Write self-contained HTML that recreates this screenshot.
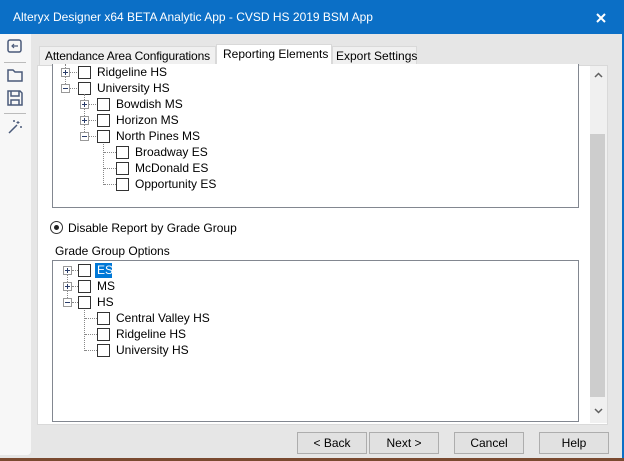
<!DOCTYPE html>
<html><head><style>
*{margin:0;padding:0;box-sizing:border-box}
body{width:624px;height:461px;position:relative;overflow:hidden;background:#e6e6e6;font-family:"Segoe UI","Liberation Sans",sans-serif;font-size:12px;color:#000}
.a{position:absolute}
.t{position:absolute;white-space:nowrap;line-height:14px}
.cb{position:absolute;width:13px;height:13px;border:1px solid #333;background:#fff}
.ex{position:absolute;width:9px;height:9px;border:1px solid #999;background:#fff}
.ex:before{content:"";position:absolute;left:1px;top:3px;width:5px;height:1px;background:#2a3d6a}
.ex.p:after{content:"";position:absolute;left:3px;top:1px;width:1px;height:5px;background:#2a3d6a}
.hd{position:absolute;height:1px;border-top:1px dotted #888}
.vd{position:absolute;width:1px;border-left:1px dotted #888}
.btn{position:absolute;top:432px;height:22px;border:1px solid #adadad;background:#e1e1e1;text-align:center;line-height:20px}
</style></head><body>
<div class="a" style="left:0;top:0;width:624px;height:34px;background:#0b6fc6"></div>
<div class="t" style="left:13px;top:10px;color:#fff;font-size:12px">Alteryx Designer x64 BETA Analytic App - CVSD HS 2019 BSM App</div>
<svg class="a" style="left:596px;top:13px" width="10" height="10"><path d="M1 1l8 8M9 1l-8 8" stroke="#fff" stroke-width="2"/></svg>
<div class="a" style="left:622px;top:34px;width:2px;height:424px;background:#0b6fc6"></div>
<div class="a" style="left:0;top:458px;width:624px;height:3px;background:#7a4a30"></div>
<!-- left toolbar -->
<div class="a" style="left:0;top:34px;width:31px;height:421px;background:#f7f7f7;border-radius:0 0 4px 0"></div>
<svg class="a" style="left:7px;top:39px" width="16" height="16"><rect x="1" y="1" width="13" height="12" rx="2" fill="none" stroke="#4a5a7a" stroke-width="1.5"/><path d="M11 7H5M7 5L5 7l2 2" fill="none" stroke="#4a5a7a" stroke-width="1.2"/></svg>
<div class="a" style="left:4px;top:62px;width:22px;height:1px;background:#bbb"></div>
<svg class="a" style="left:7px;top:68px" width="16" height="14"><path d="M1 2h5l2 2h7v9H1z" fill="none" stroke="#4a5a7a" stroke-width="1.5"/></svg>
<svg class="a" style="left:7px;top:90px" width="16" height="16"><path d="M1 1h12l2 2v12H1z M4 1v5h8V1 M4 15v-5h8v5" fill="none" stroke="#4a5a7a" stroke-width="1.5"/></svg>
<div class="a" style="left:4px;top:113px;width:22px;height:1px;background:#bbb"></div>
<svg class="a" style="left:7px;top:119px" width="16" height="16"><path d="M2 14l8-8" stroke="#4a5a7a" stroke-width="1.5"/><path d="M11 2v3M9.5 3.5h3M14 7v2M13 8h2M7 1v2M6 2h2" stroke="#4a5a7a"/></svg>
<!-- tabs -->
<div class="a" style="left:39px;top:46px;width:177px;height:20px;background:#f0f0f0;border:1px solid #d9d9d9;border-bottom:none"></div>
<div class="t" style="left:45px;top:49px;letter-spacing:-0.15px">Attendance Area Configurations</div>
<div class="a" style="left:332px;top:46px;width:85px;height:20px;background:#f0f0f0;border:1px solid #d9d9d9;border-bottom:none"></div>
<div class="t" style="left:336px;top:49px">Export Settings</div>
<div class="a" style="left:37px;top:65px;width:571px;height:360px;background:#fff;border:1px solid #d9d9d9"></div>
<div class="a" style="left:216px;top:44px;width:116px;height:23px;background:#fff;border:1px solid #d9d9d9;border-bottom:none"></div>
<div class="t" style="left:223px;top:47px">Reporting Elements</div>
<!-- scrollbar -->
<div class="a" style="left:590px;top:66px;width:17px;height:357px;background:#f0f0f0"></div>
<div class="a" style="left:590px;top:134px;width:15px;height:263px;background:#cdcdcd"></div>
<svg class="a" style="left:594px;top:72px" width="9" height="6"><path d="M1 5l3.5-3.5L8 5" fill="none" stroke="#606060" stroke-width="1.5"/></svg>
<svg class="a" style="left:594px;top:408px" width="9" height="6"><path d="M1 1l3.5 3.5L8 1" fill="none" stroke="#606060" stroke-width="1.5"/></svg>
<!-- upper tree box -->
<div class="a" style="left:52px;top:64px;width:527px;height:144px;border:1px solid #828790;border-top:none;background:#fff"></div>
<div class="vd" style="left:65px;top:64px;height:24px"></div>
<div class="ex p" style="left:61px;top:68px"></div><div class="hd" style="left:70px;top:72px;width:7px"></div>
<div class="cb" style="left:78px;top:66px"></div><div class="t" style="left:97px;top:65px">Ridgeline HS</div>
<div class="ex" style="left:61px;top:84px"></div><div class="hd" style="left:70px;top:88px;width:7px"></div>
<div class="cb" style="left:78px;top:82px"></div><div class="t" style="left:97px;top:81px">University HS</div>
<div class="vd" style="left:84px;top:94px;height:42px"></div>
<div class="ex p" style="left:80px;top:100px"></div><div class="hd" style="left:89px;top:104px;width:7px"></div>
<div class="cb" style="left:97px;top:98px"></div><div class="t" style="left:116px;top:97px">Bowdish MS</div>
<div class="ex p" style="left:80px;top:116px"></div><div class="hd" style="left:89px;top:120px;width:7px"></div>
<div class="cb" style="left:97px;top:114px"></div><div class="t" style="left:116px;top:113px">Horizon MS</div>
<div class="ex" style="left:80px;top:132px"></div><div class="hd" style="left:89px;top:136px;width:7px"></div>
<div class="cb" style="left:97px;top:130px"></div><div class="t" style="left:116px;top:129px">North Pines MS</div>
<div class="vd" style="left:103px;top:144px;height:41px"></div>
<div class="hd" style="left:104px;top:152px;width:12px"></div><div class="cb" style="left:116px;top:146px"></div><div class="t" style="left:135px;top:145px">Broadway ES</div>
<div class="hd" style="left:104px;top:168px;width:12px"></div><div class="cb" style="left:116px;top:162px"></div><div class="t" style="left:135px;top:161px">McDonald ES</div>
<div class="hd" style="left:104px;top:184px;width:12px"></div><div class="cb" style="left:116px;top:178px"></div><div class="t" style="left:135px;top:177px">Opportunity ES</div>
<!-- radio -->
<div class="a" style="left:50px;top:221px;width:13px;height:13px;border:1px solid #333;border-radius:50%;background:#fff"></div>
<div class="a" style="left:54px;top:225px;width:5px;height:5px;border-radius:50%;background:#222"></div>
<div class="t" style="left:68px;top:221px">Disable Report by Grade Group</div>
<div class="t" style="left:55px;top:244px">Grade Group Options</div>
<!-- lower tree box -->
<div class="a" style="left:52px;top:260px;width:527px;height:162px;border:1px solid #828790;background:#fff"></div>
<div class="vd" style="left:67px;top:274px;height:28px"></div>
<div class="ex p" style="left:63px;top:266px"></div><div class="hd" style="left:72px;top:270px;width:6px"></div>
<div class="cb" style="left:78px;top:264px"></div>
<div class="a" style="left:95px;top:263px;width:17px;height:15px;background:#0078d7"></div>
<div class="t" style="left:97px;top:263px;color:#fff">ES</div>
<div class="ex p" style="left:63px;top:282px"></div><div class="hd" style="left:72px;top:286px;width:6px"></div>
<div class="cb" style="left:78px;top:280px"></div><div class="t" style="left:97px;top:279px">MS</div>
<div class="ex" style="left:63px;top:298px"></div><div class="hd" style="left:72px;top:302px;width:6px"></div>
<div class="cb" style="left:78px;top:296px"></div><div class="t" style="left:97px;top:295px">HS</div>
<div class="vd" style="left:84px;top:310px;height:41px"></div>
<div class="hd" style="left:85px;top:318px;width:12px"></div><div class="cb" style="left:97px;top:312px"></div><div class="t" style="left:116px;top:311px">Central Valley HS</div>
<div class="hd" style="left:85px;top:334px;width:12px"></div><div class="cb" style="left:97px;top:328px"></div><div class="t" style="left:116px;top:327px">Ridgeline HS</div>
<div class="hd" style="left:85px;top:350px;width:12px"></div><div class="cb" style="left:97px;top:344px"></div><div class="t" style="left:116px;top:343px">University HS</div>
<!-- buttons -->
<div class="btn" style="left:297px;width:70px">&lt; Back</div>
<div class="btn" style="left:369px;width:70px">Next &gt;</div>
<div class="btn" style="left:454px;width:70px">Cancel</div>
<div class="btn" style="left:539px;width:70px">Help</div>
</body></html>
